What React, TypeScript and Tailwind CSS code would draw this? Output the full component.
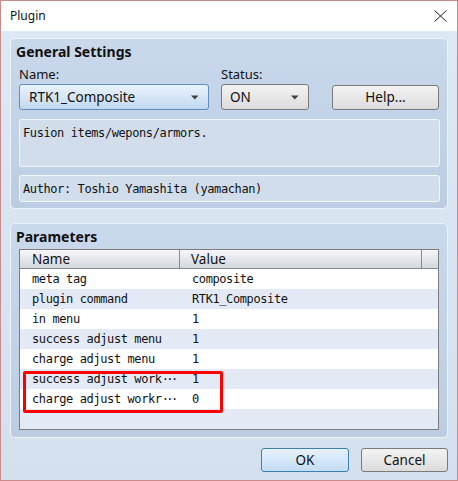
import React from "react";

const ui = { fontFamily: '"Noto Sans", "Open Sans", sans-serif' };
const mono = { fontFamily: '"DejaVu Sans Mono", "Liberation Mono", monospace', letterSpacing: "-0.4px" };

const rows: [string, string, boolean][] = [
  ["meta tag", "composite", false],
  ["plugin command", "RTK1_Composite", false],
  ["in menu", "1", false],
  ["success adjust menu", "1", false],
  ["charge adjust menu", "1", false],
  ["success adjust work", "1", true],
  ["charge adjust workr", "0", true],
  ["", "", false],
];

function Arrow() {
  return (
    <svg width="8" height="5" viewBox="0 0 8 5">
      <path d="M0 0.5 L7.5 0.5 L3.75 4.5 Z" fill="#404040" />
    </svg>
  );
}

export default function App() {
  return (
    <div
      className="w-[458px] h-[481px] border border-[#c98a8c] flex flex-col text-[#111]"
      style={ui}
    >
      <div className="h-[30px] bg-white flex items-center justify-between pl-[9px] pr-[10px]">
        <span className="text-[12px]">Plugin</span>
        <svg width="13" height="12" viewBox="0 0 13 12">
          <path d="M0.5 0.5 L12.5 11.5 M12.5 0.5 L0.5 11.5" stroke="#222" strokeWidth="1" />
        </svg>
      </div>
      <div className="flex-1 bg-gradient-to-b from-[#dde8f5] to-[#d4e0ee] px-[9px] pt-[7px] flex flex-col">
        {/* General Settings */}
        <div className="h-[171px] rounded-[5px] border border-[#edf3fa] bg-gradient-to-b from-[#c9d8eb] to-[#bccde3] pl-[8px] pr-[7px] pt-[5px] flex flex-col">
          <div className="h-[16px] leading-[16px] text-[14px] font-bold -ml-[3px]">General Settings</div>
          <div className="flex mt-[6px]">
            <div className="w-[190px] flex flex-col">
              <div className="h-[16px] leading-[16px] text-[13px]">Name:</div>
              <div className="mt-[2px] h-[26px] rounded-[3px] border border-[#5f8dbf] bg-gradient-to-b from-[#eaf3fc] to-[#c2d8ef] flex items-center justify-between pl-[9px] pr-[9px] text-[13.5px]">
                <span>RTK1_Composite</span>
                <Arrow />
              </div>
            </div>
            <div className="w-[88px] ml-[12px] flex flex-col">
              <div className="h-[16px] leading-[16px] text-[13px]">Status:</div>
              <div className="mt-[2px] h-[26px] rounded-[3px] border border-[#7a7a7a] bg-gradient-to-b from-[#f3f3f3] to-[#dcdcdc] flex items-center justify-between pl-[8px] pr-[9px] text-[13.5px]">
                <span>ON</span>
                <Arrow />
              </div>
            </div>
            <div className="ml-[23px] mt-[19px] w-[107px] h-[25px] rounded-[3px] border border-[#7a7a7a] bg-gradient-to-b from-[#f3f3f3] to-[#dcdcdc] flex items-center justify-center text-[13.5px]">
              Help...
            </div>
          </div>
          <div
            className="mt-[9px] h-[48px] rounded-[3px] border border-[#f3f7fc] bg-[#d1ddeb] pl-[3px] pt-[5px] text-[12px] leading-[16px]"
            style={mono}
          >
            Fusion items/wepons/armors.
          </div>
          <div
            className="mt-[8px] h-[27px] rounded-[3px] border border-[#f3f7fc] bg-[#d1ddeb] pl-[3px] flex items-center text-[12px]"
            style={mono}
          >
            Author: Toshio Yamashita (yamachan)
          </div>
        </div>

        {/* Parameters */}
        <div className="mt-[14px] h-[215px] rounded-[5px] border border-[#edf3fa] bg-gradient-to-b from-[#c9d8eb] to-[#bccde3] pl-[8px] pr-[8px] pt-[5px] flex flex-col">
          <div className="h-[16px] leading-[16px] text-[14px] font-bold -ml-[3px]">Parameters</div>
          <div className="relative mt-[4px] w-[420px] border border-[#7c7c7c] bg-white">
            <div className="flex h-[19px] bg-gradient-to-b from-[#f6f7f9] to-[#d3d8df] border-b border-[#8a8a8a] text-[13.5px] leading-[18px]">
              <div className="w-[160px] pl-[12px] border-r border-[#8a8a8a]">Name</div>
              <div className="w-[242px] pl-[11px] border-r border-[#8a8a8a]">Value</div>
              <div className="flex-1" />
            </div>
            {rows.map(([n, v, ell], i) => (
              <div
                key={i}
                className={`flex h-[20px] items-center text-[12px] ${i % 2 === 1 ? "bg-[#e3eaf5]" : "bg-white"}`}
                style={mono}
              >
                <div className="w-[160px] pl-[12px] whitespace-pre">
                  {n}
                  {ell && <span className="tracking-[-2.6px]">{"\u00b7\u00b7\u00b7"}</span>}
                </div>
                <div className="pl-[12px] whitespace-pre">{v}</div>
              </div>
            ))}
            <div className="absolute left-[3px] top-[121px] w-[200px] h-[42px] border-[3px] border-[#f00] rounded-[2px]" />
          </div>
        </div>

        <div className="mt-[10px] flex justify-end gap-[12px]">
          <div className="w-[88px] h-[24px] rounded-[3px] border border-[#3c7fb1] bg-gradient-to-b from-[#e7f2fc] to-[#c2ddf5] flex items-center justify-center text-[13.5px]">
            OK
          </div>
          <div className="w-[87px] h-[24px] rounded-[3px] border border-[#7a7a7a] bg-gradient-to-b from-[#f3f3f3] to-[#dcdcdc] flex items-center justify-center text-[13.5px]">
            Cancel
          </div>
        </div>
      </div>
    </div>
  );
}
